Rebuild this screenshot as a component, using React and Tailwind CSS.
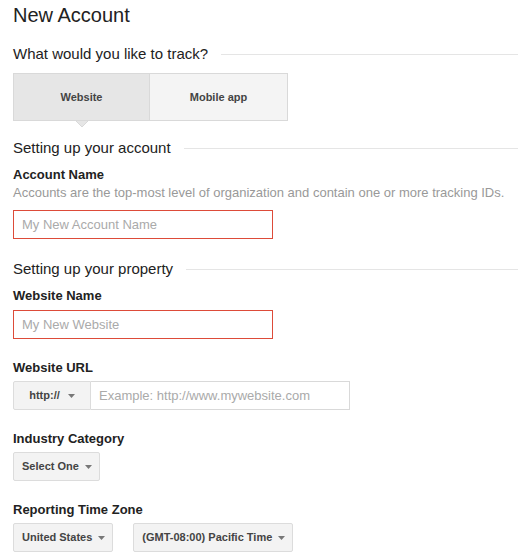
import React from "react";

function Caret() {
  return (
    <svg width="7" height="4" viewBox="0 0 7 4" className="shrink-0">
      <path d="M0 0h7L3.5 4z" fill="#777" />
    </svg>
  );
}

function Section({ title, className }) {
  return (
    <div className={"flex items-center " + className}>
      <div className="text-[15px] leading-[20px] text-[#222] whitespace-nowrap">{title}</div>
      <div className="ml-[13px] h-px flex-1 bg-[#e5e5e5]" />
    </div>
  );
}

function Label({ children, className }) {
  return (
    <div className={"text-[13px] leading-[16px] font-bold text-[#222] " + className}>{children}</div>
  );
}

function SelectBtn({ children, className }) {
  return (
    <div
      className={
        "flex h-[29px] items-center gap-[6px] rounded-[2px] border border-[#dcdcdc] bg-[#f3f3f3] pl-[8px] pr-[7px] text-[11px] font-bold text-[#444] " +
        (className || "")
      }
    >
      <span>{children}</span>
      <Caret />
    </div>
  );
}

export default function App() {
  return (
    <div className="min-h-[559px] bg-white pl-[13px] font-['Liberation_Sans',Arial,sans-serif]">
      <div className="pt-px text-[20px] leading-[28px] text-[#222]">New Account</div>

      <Section title="What would you like to track?" className="mt-[15px]" />

      <div className="mt-[9px] flex h-[48px] w-[275px] border border-[#d9d9d9]">
        <div className="relative flex w-[136px] items-center justify-center border-r border-[#d9d9d9] bg-[#e6e6e6] text-[11px] font-bold text-[#444]">
          Website
          <svg
            width="12"
            height="6"
            viewBox="0 0 12 6"
            className="absolute left-[62px] top-[47px]"
          >
            <path d="M0 0L6 6L12 0z" fill="#e6e6e6" />
            <path d="M0 0L6 6L12 0" fill="none" stroke="#d9d9d9" strokeWidth="1" />
          </svg>
        </div>
        <div className="flex flex-1 items-center justify-center bg-[#f4f4f4] text-[11px] font-bold text-[#444]">
          Mobile app
        </div>
      </div>

      <Section title="Setting up your account" className="mt-[17px]" />

      <Label className="mt-[9px]">Account Name</Label>
      <div className="mt-[2px] text-[13px] leading-[16px] text-[#999]">
        Accounts are the top-most level of organization and contain one or more tracking IDs.
      </div>
      <input
        className="mt-[9px] block h-[29px] w-[260px] border border-[#dd4b39] px-[8px] text-[13px] text-[#222] outline-none placeholder:text-[#aaa]"
        placeholder="My New Account Name"
      />

      <Section title="Setting up your property" className="mt-[20px]" />

      <Label className="mt-[9px]">Website Name</Label>
      <input
        className="mt-[6px] block h-[29px] w-[260px] border border-[#dd4b39] px-[8px] text-[13px] text-[#222] outline-none placeholder:text-[#aaa]"
        placeholder="My New Website"
      />

      <Label className="mt-[21px]">Website URL</Label>
      <div className="mt-[5px] flex h-[29px] w-[337px]">
        <div className="flex w-[78px] items-center justify-center gap-[8px] rounded-l-[2px] border border-[#dcdcdc] bg-[#f3f3f3] text-[11px] font-bold text-[#444]">
          <span>http://</span>
          <Caret />
        </div>
        <input
          className="block h-full flex-1 border border-l-0 border-[#d9d9d9] px-[8px] text-[13px] text-[#222] outline-none placeholder:text-[#aaa]"
          placeholder="Example: http://www.mywebsite.com"
        />
      </div>

      <Label className="mt-[21px]">Industry Category</Label>
      <div className="mt-[5px] flex">
        <SelectBtn>Select One</SelectBtn>
      </div>

      <Label className="mt-[21px]">Reporting Time Zone</Label>
      <div className="mt-[5px] flex gap-[20px]">
        <SelectBtn>United States</SelectBtn>
        <SelectBtn>(GMT-08:00) Pacific Time</SelectBtn>
      </div>
    </div>
  );
}
